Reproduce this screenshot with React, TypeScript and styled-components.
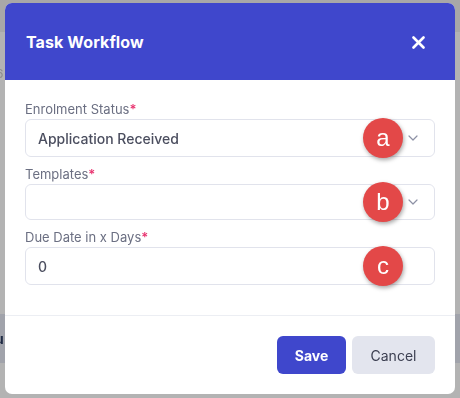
import React from "react";
import styled, { createGlobalStyle } from "styled-components";

const GlobalStyle = createGlobalStyle`
  html, body {
    margin: 0;
    padding: 0;
    width: 460px;
    height: 398px;
    overflow: hidden;
  }
  body {
    font-family: Inter, "Open Sans", Arial, sans-serif;
  }
`;

const Chevron = () => (
  <svg width="10" height="6" viewBox="0 0 10 6" fill="none">
    <path d="M1 1l4 4 4-4" stroke="#8d91a5" strokeWidth="1.2" strokeLinecap="round" strokeLinejoin="round" />
  </svg>
);

const CloseIcon = () => (
  <svg width="13" height="13" viewBox="0 0 13 13" fill="none">
    <path d="M1.5 1.5l10 10M11.5 1.5l-10 10" stroke="#fff" strokeWidth="2.6" strokeLinecap="round" />
  </svg>
);

const Field = ({
  label,
  value,
  badge,
  select,
  tall = true,
}: {
  label: string;
  value?: string;
  badge: string;
  select?: boolean;
  tall?: boolean;
}) => (
  <FieldGroup>
    <Label>
      {label}
      <Required>*</Required>
    </Label>
    <InputBox $tall={tall}>
      <Value>{value}</Value>
      {select && (
        <ChevronWrap>
          <Chevron />
        </ChevronWrap>
      )}
      <Badge>{badge}</Badge>
    </InputBox>
  </FieldGroup>
);

const App = () => {
  return (
    <>
      <GlobalStyle />
      <Backdrop>
        <BackTop />
        <BackBody>
          <BackGlyph>6</BackGlyph>
        </BackBody>
        <BackRow>
          <RowGlyph>u</RowGlyph>
        </BackRow>
        <BackRest />
      </Backdrop>
      <Modal>
        <Header>
          <Title>Task Workflow</Title>
          <CloseButton>
            <CloseIcon />
          </CloseButton>
        </Header>
        <Body>
          <Field label="Enrolment Status" value="Application Received" badge="a" select />
          <Field label="Templates" badge="b" select tall={false} />
          <Field label="Due Date in x Days" value="0" badge="c" />
        </Body>
        <Footer>
          <SaveButton>Save</SaveButton>
          <CancelButton>Cancel</CancelButton>
        </Footer>
      </Modal>
    </>
  );
};

export default App;

const Backdrop = styled.div`
  position: fixed;
  inset: 0;
  display: flex;
  flex-direction: column;
  background: #b3b3b3;
`;

const BackTop = styled.div`
  height: 32px;
  background: #a8a8a8;
`;

const BackBody = styled.div`
  height: 282px;
  position: relative;
`;

const BackGlyph = styled.span`
  position: absolute;
  left: -4px;
  top: 34px;
  font-size: 12px;
  color: #8c8c8c;
`;

const BackRow = styled.div`
  height: 49px;
  background: #a1a3ab;
  display: flex;
  align-items: center;
`;

const RowGlyph = styled.span`
  margin-left: -5px;
  font-size: 14px;
  font-weight: 700;
  color: #1f2a44;
`;

const BackRest = styled.div`
  flex: 1;
`;

const Modal = styled.div`
  position: absolute;
  left: 5px;
  top: 3px;
  width: 450px;
  height: 391px;
  background: #fff;
  border-radius: 7px;
  overflow: hidden;
  display: flex;
  flex-direction: column;
`;

const Header = styled.div`
  height: 77px;
  background: #3f47cc;
  display: flex;
  align-items: center;
  justify-content: space-between;
  padding: 0 30px 0 21px;
  flex-shrink: 0;
`;

const Title = styled.h2`
  margin: 0;
  color: #fff;
  font-size: 16px;
  font-weight: 700;
  letter-spacing: 0.1px;
`;

const CloseButton = styled.div`
  display: flex;
  margin-top: 1px;
`;

const Body = styled.div`
  padding: 20px 20px 30px;
  display: flex;
  flex-direction: column;
  gap: 8px;
  border-bottom: 1px solid #eceef3;
`;

const FieldGroup = styled.div`
  display: flex;
  flex-direction: column;
`;

const Label = styled.label`
  font-size: 13px;
  line-height: 18px;
  color: #6b6f82;
  margin-bottom: 1px;
`;

const Required = styled.span`
  color: #e8336f;
  font-weight: 600;
`;

const InputBox = styled.div<{ $tall: boolean }>`
  position: relative;
  height: ${(p) => (p.$tall ? 38 : 36)}px;
  box-sizing: border-box;
  border: 1px solid #e1e3ec;
  border-radius: 6px;
  display: flex;
  align-items: center;
  padding: 0 12px;
`;

const Value = styled.span`
  flex: 1;
  font-size: 14px;
  font-weight: 500;
  color: #4b4e5f;
`;

const ChevronWrap = styled.span`
  display: flex;
  margin-right: 4px;
`;

const Badge = styled.span`
  position: absolute;
  left: 337px;
  top: 50%;
  margin-top: -20px;
  width: 40px;
  height: 40px;
  border-radius: 50%;
  background: #e34848;
  box-shadow: 1px 2px 4px rgba(0, 0, 0, 0.35);
  color: #fff;
  font-family: "Liberation Sans", Arial, sans-serif;
  font-size: 24px;
  line-height: 40px;
  text-align: center;
`;

const Footer = styled.div`
  display: flex;
  justify-content: flex-end;
  gap: 6px;
  padding: 20px 20px;
`;

const BaseButton = styled.button`
  height: 38px;
  border: none;
  border-radius: 6px;
  font-family: inherit;
  font-size: 14px;
  padding: 0;
  cursor: pointer;
`;

const SaveButton = styled(BaseButton)`
  width: 69px;
  background: #3f47cc;
  color: #fff;
  font-weight: 700;
`;

const CancelButton = styled(BaseButton)`
  width: 83px;
  background: #e3e5ee;
  color: #3d4052;
  font-weight: 400;
`;
